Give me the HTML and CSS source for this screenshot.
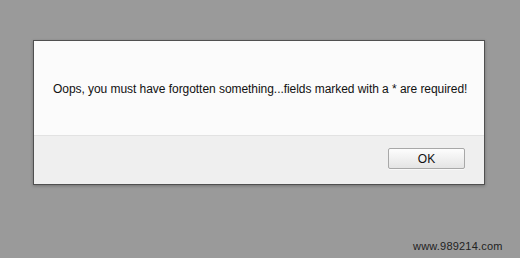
FILE: index.html
```html
<!DOCTYPE html>
<html>
<head>
<meta charset="utf-8">
<link rel="stylesheet" href="styles.css">
</head>
<body>
<div class="stage">
  <div class="dialog">
    <div class="body">
      <p class="msg">Oops, you must have forgotten something...fields marked with a * are required!</p>
    </div>
    <div class="footer">
      <button class="ok">OK</button>
    </div>
  </div>
  <div class="watermark">www.989214.com</div>
</div>
</body>
</html>
```
FILE: styles.css
```css
html, body {
  margin: 0;
  padding: 0;
  background: #9a9a9a;
  width: 520px;
  height: 258px;
  overflow: hidden;
}
.stage {
  position: relative;
  width: 520px;
  height: 258px;
  padding: 40px 0 0 33px;
  box-sizing: border-box;
  font-family: "Liberation Sans", Arial, sans-serif;
}
.dialog {
  width: 450px;
  border: 1px solid #505050;
  background: #fbfbfb;
  box-shadow: 0 1px 3px rgba(0,0,0,0.25);
}
.body {
  height: 95px;
  box-sizing: border-box;
  padding-top: 41px;
  border-bottom: 1px solid #e2e2e2;
  background: #fbfbfb;
}
.msg {
  margin: 0;
  padding-left: 19px;
  font-size: 12px;
  line-height: 14px;
  letter-spacing: -0.05px;
  color: #111;
}
.footer {
  height: 48px;
  background: #efefef;
  display: flex;
  justify-content: flex-end;
  align-items: flex-start;
  padding: 12px 19px 0 0;
  box-sizing: border-box;
}
.ok {
  width: 77px;
  height: 21px;
  border: 1px solid #a8a8a8;
  border-radius: 2px;
  background: linear-gradient(#fdfdfd, #e4e4e4);
  font-family: "Liberation Sans", Arial, sans-serif;
  font-size: 12px;
  color: #111;
  padding: 0;
  box-shadow: 0 1px 0 rgba(255,255,255,0.6);
}
.watermark {
  position: absolute;
  left: 413px;
  top: 240px;
  font-size: 11px;
  color: #222;
  letter-spacing: 0.2px;
}
```
